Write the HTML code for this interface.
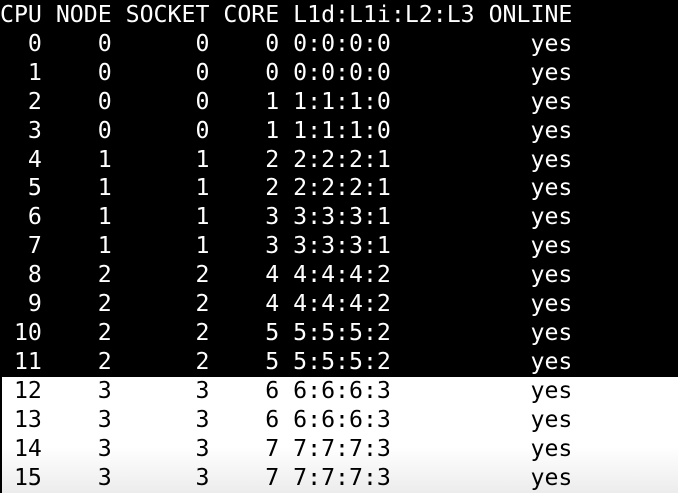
<!DOCTYPE html>
<html><head><style>
html,body{margin:0;padding:0;background:#000;width:678px;height:493px;overflow:hidden}
.w{position:absolute;left:2px;top:377px;width:676px;height:116px;background:linear-gradient(#fff,#fff 60%,#ececec)}
pre{position:absolute;left:0;top:1px;margin:0;font-family:"DejaVu Sans Mono","Liberation Mono",monospace;font-size:23.2px;line-height:28.9px;color:#fff;white-space:pre}
.b{color:#000}
</style></head><body>
<div class="w"></div>
<pre>CPU NODE SOCKET CORE L1d:L1i:L2:L3 ONLINE
  0    0      0    0 0:0:0:0          yes
  1    0      0    0 0:0:0:0          yes
  2    0      0    1 1:1:1:0          yes
  3    0      0    1 1:1:1:0          yes
  4    1      1    2 2:2:2:1          yes
  5    1      1    2 2:2:2:1          yes
  6    1      1    3 3:3:3:1          yes
  7    1      1    3 3:3:3:1          yes
  8    2      2    4 4:4:4:2          yes
  9    2      2    4 4:4:4:2          yes
 10    2      2    5 5:5:5:2          yes
 11    2      2    5 5:5:5:2          yes
<span class="b"> 12    3      3    6 6:6:6:3          yes
 13    3      3    6 6:6:6:3          yes
 14    3      3    7 7:7:7:3          yes
 15    3      3    7 7:7:7:3          yes</span></pre>
</body></html>
